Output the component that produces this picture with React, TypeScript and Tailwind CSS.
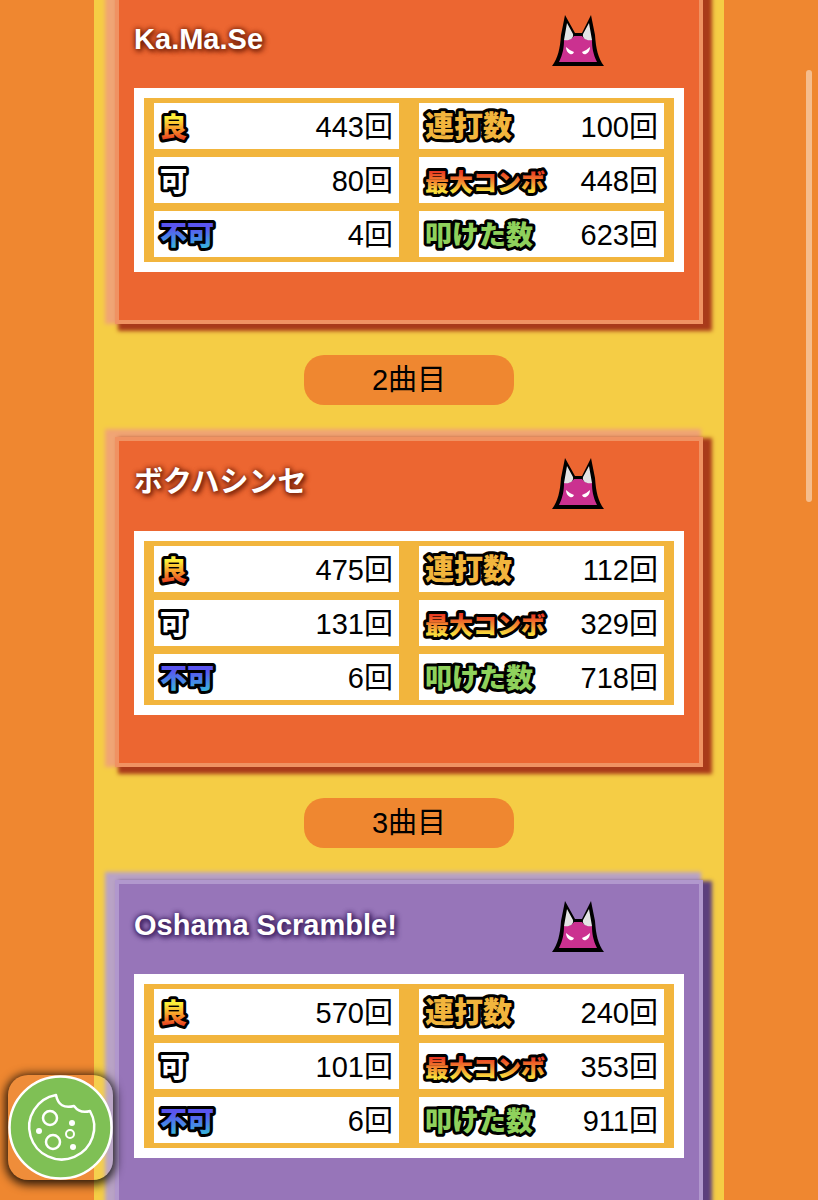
import React from 'react';

const songs = [
  {
    title: 'Ka.Ma.Se',
    theme: 'orange',
    stats: ['443', '100', '80', '448', '4', '623'],
  },
  {
    title: 'ボクハシンセ',
    theme: 'orange',
    stats: ['475', '112', '131', '329', '6', '718'],
  },
  {
    title: 'Oshama Scramble!',
    theme: 'purple',
    stats: ['570', '240', '101', '353', '6', '911'],
  },
];

const themes: Record<string, { card: string; title: string }> = {
  orange: {
    card: 'bg-[#ec6631] border-[#f09262] shadow-[6px_4px_4px_3px_#a93a1a,-6px_-4px_4px_4px_#f0a575]',
    title: '[text-shadow:0_0_5px_#7a240b,1px_1px_6px_#7a240b,2px_2px_5px_#8c2d10]',
  },
  purple: {
    card: 'bg-[#9775b9] border-[#b198cd] shadow-[6px_4px_4px_3px_#5c3f7c,-6px_-4px_4px_4px_#b9a3c6]',
    title: '[text-shadow:0_0_5px_#3f2262,1px_1px_6px_#3f2262,2px_2px_5px_#4b2c70]',
  },
};

type LabelProps = { text: string; fill: string; size: number; width: number };

const labels: LabelProps[] = [
  { text: '良', fill: 'url(#good)', size: 27, width: 36 },
  { text: '連打数', fill: '#f2b53d', size: 29, width: 96 },
  { text: '可', fill: '#ffffff', size: 27, width: 36 },
  { text: '最大コンボ', fill: 'url(#combo)', size: 24, width: 128 },
  { text: '不可', fill: 'url(#bad)', size: 27, width: 64 },
  { text: '叩けた数', fill: '#8fd15c', size: 27, width: 120 },
];

function Gradients() {
  return (
    <svg className="absolute w-0 h-0" aria-hidden="true">
      <defs>
        <linearGradient id="good" x1="0" y1="0" x2="0" y2="1">
          <stop offset="0.3" stopColor="#fdf03a" />
          <stop offset="0.55" stopColor="#f9a62c" />
          <stop offset="0.85" stopColor="#e9401f" />
        </linearGradient>
        <linearGradient id="combo" x1="0" y1="0" x2="0" y2="1">
          <stop offset="0.25" stopColor="#ea3a23" />
          <stop offset="0.55" stopColor="#f28a30" />
          <stop offset="0.8" stopColor="#f8dc3c" />
        </linearGradient>
        <linearGradient id="bad" x1="0" y1="0" x2="0" y2="1">
          <stop offset="0.35" stopColor="#5a55f0" />
          <stop offset="0.85" stopColor="#38b0dc" />
        </linearGradient>
      </defs>
    </svg>
  );
}

function Label({ text, fill, size, width }: LabelProps) {
  return (
    <svg width={width} height="46" className="block overflow-visible">
      <text
        x="3"
        y="34"
        fontSize={size}
        fill={fill}
        stroke="#000000"
        strokeWidth="6"
        strokeLinejoin="round"
        paintOrder="stroke"
        className="font-['Noto_Sans_CJK_JP',sans-serif] font-black"
      >
        {text}
      </text>
    </svg>
  );
}

function DemonIcon() {
  return (
    <svg width="52" height="52" viewBox="0 0 52 52" role="img" aria-label="おに">
      <path d="M0 51 C6 43 8 34 9 20 L13 0 L23 18 H30 L39 0 L43 20 C44 34 46 43 52 51 Z" fill="#000" />
      <path d="M7 47 C11 39 12 32 12 25 Q20 25 22 21 H30 Q32 25 40 25 C40 32 41 39 45 47 Z" fill="#cb3190" />
      <path d="M15 8 L21 19 C22 24 17 26 12 25 Z M37 8 L31 19 C30 24 35 26 40 25 Z" fill="#e4e4e4" />
      <path d="M14 32 Q17 35 22 37 Q21 40 18 39 Q14 37 14 32 Z M38 32 Q35 35 30 37 Q31 40 34 39 Q38 37 38 32 Z" fill="#fff" />
    </svg>
  );
}

function Stat({ index, value }: { index: number; value: string }) {
  return (
    <>
      <th scope="row" className="h-[54px] p-0 pl-[3px] bg-white bg-clip-padding border-y-4 border-l-10 border-[#f2b53d] text-left">
        <Label {...labels[index]} />
      </th>
      <td className="h-[54px] p-0 pt-0.5 pr-1.5 bg-white bg-clip-padding border-y-4 border-r-10 border-[#f2b53d] text-right">
        {value}回
      </td>
    </>
  );
}

function SongCard({ song }: { song: (typeof songs)[number] }) {
  const theme = themes[song.theme];

  return (
    <section className={`border-4 px-[15px] pb-12 ${theme.card}`}>
      <div className="h-[90px] pb-1 pr-20 flex items-center justify-between">
        <h2 className={`pb-1 font-bold text-white ${theme.title}`}>{song.title}</h2>
        <DemonIcon />
      </div>
      <div className="border-10 border-white bg-[#f2b53d] py-px">
        <table className="w-full table-fixed border-separate border-spacing-0">
          <colgroup>
            <col className="w-[18%]" />
            <col className="w-[32%]" />
            <col className="w-[27%]" />
            <col className="w-[23%]" />
          </colgroup>
          <tbody>
            {[0, 2, 4].map((i) => (
              <tr key={i}>
                <Stat index={i} value={song.stats[i]} />
                <Stat index={i + 1} value={song.stats[i + 1]} />
              </tr>
            ))}
          </tbody>
        </table>
      </div>
    </section>
  );
}

function CookieButton() {
  return (
    <button
      type="button"
      aria-label="Cookie"
      className="fixed bottom-5 left-2 size-[105px] rounded-[20px] bg-white/5 shadow-[0_2px_10px_3px_rgba(0,0,0,0.8)]"
    >
      <svg viewBox="0 0 105 105" className="size-full" fill="none" stroke="#fff" strokeWidth="2.5">
        <circle cx="52.5" cy="52.5" r="51" fill="#7fc055" strokeWidth="2.5" />
        <path
          d="M48 20 A32.5 32.5 0 1 0 82 36 Q72 39 66 31 Q51 35 48 20 Z"
          strokeLinejoin="round"
        />
        <circle cx="42" cy="43" r="7" />
        <circle cx="45" cy="67" r="7" />
        <circle cx="62" cy="59" r="4" strokeWidth="2" />
        <g fill="#fff" stroke="none">
          <circle cx="31" cy="56" r="3" />
          <circle cx="64" cy="48" r="3" />
          <circle cx="65" cy="72" r="3" />
        </g>
      </svg>
    </button>
  );
}

export default function App() {
  return (
    <div className="h-screen overflow-hidden bg-[#ef8730] text-[29px] leading-[40px] text-black font-['Liberation_Sans','Noto_Sans_CJK_JP',sans-serif]">
      <Gradients />
      <main className="w-[77%] min-h-full mx-auto px-[21px] bg-[#f5cd45] flow-root">
        <div className="-mt-1.5">
          {songs.map((song, i) => (
            <React.Fragment key={song.title}>
              {i > 0 && (
                <div className="w-[210px] h-[50px] mt-[31px] mb-8 mx-auto rounded-[20px] bg-[#ef8730] flex items-center justify-center">
                  {i + 1}曲目
                </div>
              )}
              <SongCard song={song} />
            </React.Fragment>
          ))}
        </div>
      </main>
      <CookieButton />
      {/* Scroll indicator */}
      <div className="fixed top-[70px] right-1.5 w-1.5 h-[432px] rounded-full bg-[#f5bd8d]"></div>
    </div>
  );
}
